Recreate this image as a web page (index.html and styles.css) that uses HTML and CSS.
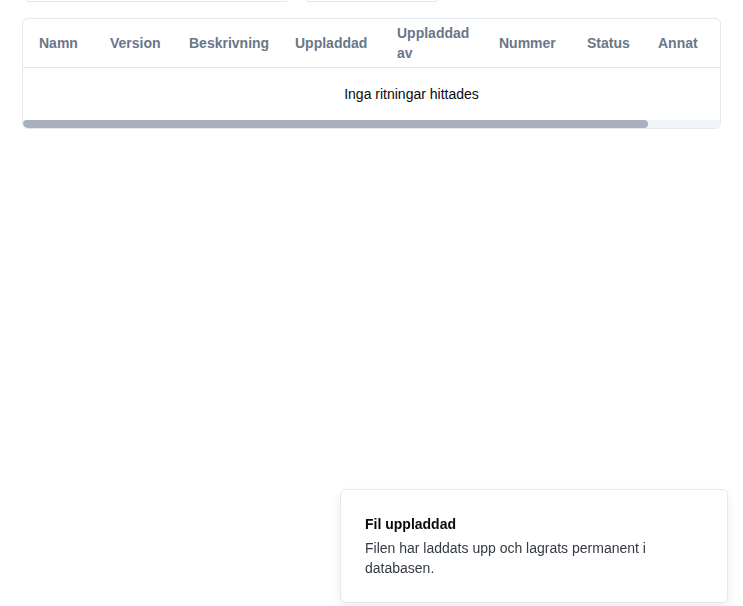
FILE: index.html
```html
<!DOCTYPE html>
<html lang="sv">
<head>
<meta charset="utf-8">
<title>Ritningar</title>
<link rel="stylesheet" href="styles.css">
</head>
<body>
<main class="page">
  <div class="filters">
    <div class="input input-search"></div>
    <div class="input input-select"></div>
  </div>
  <section class="card">
    <div class="scroller">
      <table class="table">
        <colgroup>
          <col class="c-namn"><col class="c-version"><col class="c-besk"><col class="c-upp">
          <col class="c-uppav"><col class="c-nummer"><col class="c-status"><col class="c-annat"><col class="c-actions">
        </colgroup>
        <thead>
          <tr>
            <th>Namn</th>
            <th>Version</th>
            <th>Beskrivning</th>
            <th>Uppladdad</th>
            <th>Uppladdad av</th>
            <th>Nummer</th>
            <th>Status</th>
            <th>Annat</th>
            <th></th>
          </tr>
        </thead>
        <tbody>
          <tr>
            <td class="empty" colspan="9">Inga ritningar hittades</td>
          </tr>
        </tbody>
      </table>
    </div>
    <div class="scrollbar"><div class="thumb" style="width: 625px"></div></div>
  </section>
</main>
<div class="toast" role="status">
  <div class="toast-title">Fil uppladdad</div>
  <div class="toast-desc">Filen har laddats upp och lagrats permanent i databasen.</div>
</div>
</body>
</html>
```

FILE: styles.css
```css
* { box-sizing: border-box; }
html, body { margin: 0; padding: 0; background: #ffffff; }
body {
  font-family: "Liberation Sans", Arial, sans-serif;
  font-size: 14px;
  line-height: 20px;
  color: #0a0a0a;
  overflow: hidden;
  height: 606px;
}
.page {
  padding: 0 22px 0 22px;
}
.filters {
  display: flex;
  gap: 12px;
  margin-top: -35px;
  margin-bottom: 16px;
}
.input {
  height: 37px;
  border: 1px solid #e2e8f0;
  border-radius: 6px;
  background: #fff;
}
.input-search { width: 268px; margin-left: 1px; }
.input-select { width: 137px; }
.card {
  border: 1px solid #e2e8f0;
  border-radius: 6px;
  overflow: hidden;
  background: #fff;
  width: 699px;
}
.scroller { overflow: hidden; }
.table {
  table-layout: fixed;
  border-collapse: collapse;
  width: 777px;
}
.c-namn { width: 71px; }
.c-version { width: 79px; }
.c-besk { width: 106px; }
.c-upp { width: 102px; }
.c-uppav { width: 102px; }
.c-nummer { width: 88px; }
.c-status { width: 71px; }
.c-annat { width: 71px; }
.c-actions { width: 87px; }
.table th {
  height: 48px;
  padding: 4px 16px;
  text-align: left;
  font-weight: 700;
  font-size: 14px;
  line-height: 20px;
  color: #6b7689;
  border-bottom: 1px solid #e2e8f0;
  vertical-align: middle;
}
.table td.empty {
  height: 52px;
  padding: 16px;
  text-align: center;
  color: #0a0a0a;
}
.scrollbar {
  height: 8px;
  background: #f1f4f8;
}
.thumb {
  height: 8px;
  background: #a8b0bf;
  border-radius: 4px;
}
.toast {
  position: fixed;
  right: 15px;
  bottom: 3px;
  width: 388px;
  padding: 24px;
  border: 1px solid #e2e8f0;
  border-radius: 6px;
  background: #fff;
  box-shadow: 0 4px 10px rgba(15, 23, 42, 0.08);
  display: flex;
  flex-direction: column;
  gap: 4px;
}
.toast-title {
  font-weight: 700;
  color: #0a0a0a;
  font-size: 14px;
  line-height: 20px;
}
.toast-desc {
  color: #333a45;
  font-size: 14px;
  line-height: 20px;
}
```
